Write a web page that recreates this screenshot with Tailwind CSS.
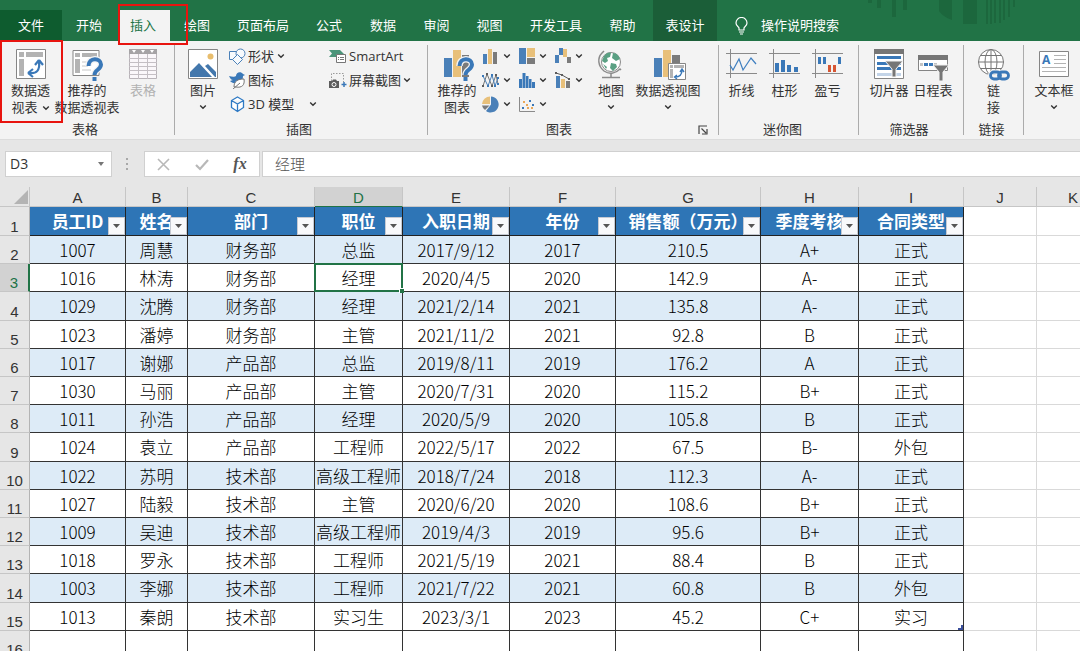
<!DOCTYPE html>
<html lang="zh-CN">
<head>
  <meta charset="UTF-8" />
  <meta name="viewport" content="width=device-width, initial-scale=1.0"/>
  <title>员工数据表</title>
  <script src="https://cdn.jsdelivr.net/npm/@tailwindcss/browser@4"></script>
</head>
<body class="h-screen flex flex-col overflow-hidden bg-[#e6e6e6] text-[#333] font-['Open_Sans','Noto_Sans_CJK_SC',sans-serif]">

  <!-- Shared symbols -->
  <svg class="hidden">
    <symbol id="chevron" viewBox="0 0 8 8"><path d="M1.2 2.5 4 5.2 6.8 2.5" fill="none" stroke="#333" stroke-width="1.4"/></symbol>
  </svg>

  <!-- Tabs -->
  <header class="relative h-[41px] shrink-0 bg-[#217346] text-white text-[13px]">
    <svg class="absolute right-0 top-0 w-[215px] h-[26px]" viewBox="0 0 215 26" fill="#1c673d">
      <path d="M3 0h4v3H3zM12 0h4v8h-4zM27 0h4v17h-4zM38 0h4v10h-4zM74 0h13v20q-9-3-13-9zM98 0h14v24H98zM121 0h2v24h-2zM125 0h2v24h-2zM129 0h2v23h-2zM134 0h2v23h-2zM138 0h2v20h-2zM143 0h2v17h-2zM148 0h2v7h-2z"/>
    </svg>
    <nav class="relative flex h-full">
      <button class="mt-[10px] w-[62px] bg-[#0e5c2f]">文件</button>
      <button class="mt-[10px] w-[54px]">开始</button>
      <button class="relative mt-[10px] ml-[3px] w-[51px] pr-[3px] bg-[#f3f3f3] text-[#217346]">
        插入
        <span class="absolute z-10 -left-px -top-[6px] w-[70px] h-[41px] border-2 border-[#e8140f] pointer-events-none"></span>
      </button>
      <button class="mt-[10px] w-[54px]">绘图</button>
      <button class="mt-[10px] w-[78px]">页面布局</button>
      <button class="mt-[10px] w-[54px]">公式</button>
      <button class="mt-[10px] w-[54px]">数据</button>
      <button class="mt-[10px] w-[53px]">审阅</button>
      <button class="mt-[10px] w-[53px]">视图</button>
      <button class="mt-[10px] w-[80px]">开发工具</button>
      <button class="mt-[10px] w-[53px]">帮助</button>
      <button class="ml-1 w-16 pt-[10px] bg-[#1b5e38]">表设计</button>
      <button class="mt-[10px] ml-[17px] flex items-center gap-3">
        <svg class="w-[15px] h-[18px]" viewBox="0 0 15 18" fill="none" stroke="#fff" stroke-width="1.2">
          <path d="M5 13v-2C4.500 9.500 2 9 2 6a5.500 5.500 0 0 1 11 0c0 3-2.500 3.500-3 5v2zM5 15h5M6 17h3"/>
        </svg>
        操作说明搜索
      </button>
    </nav>
  </header>

  <!-- Ribbon -->
  <section class="h-[99px] shrink-0 flex bg-[#f3f3f3] border-b border-[#dcdcdc] text-[13px] leading-[17px] whitespace-nowrap">

    <!-- Tables -->
    <div class="w-[174px] shrink-0 flex flex-col">
      <div class="flex h-20">
        <button class="relative w-[61px] pt-2 flex flex-col items-center">
          <svg class="w-[30px] h-[30px] mb-[3px]" viewBox="0 0 30 30">
            <path d="M.5.500h29v29H.5z" fill="#fff" stroke="#858585"/>
            <path d="M3 3h5v5H3zM10 3h17v5H10zM3 10h5v17H3z" fill="#b3b3b3"/>
            <path d="M13 24c8 1 11-3 10-11M23 11l-4 5M23 11l4 5M12 24l5-4M12 24l5 4" fill="none" stroke="#3a78b8" stroke-width="2.200"/>
          </svg>
          <span>数据透</span>
          <span class="flex items-center gap-1">视表<svg class="w-2 h-2"><use href="#chevron"/></svg></span>
          <span class="absolute z-10 left-0 -top-px w-[63px] h-[83px] border-2 border-[#e8140f] pointer-events-none"></span>
        </button>
        <button class="w-[52px] pt-2 flex flex-col items-center">
          <svg class="w-[32px] h-[32px] mb-px" viewBox="0 0 32 32">
            <path d="M2 1.500h26v25H2z" fill="#fff" stroke="#858585"/>
            <path d="M4 4h5v4H4zM11 4h15v4H11zM4 10h5v14H4z" fill="#b3b3b3"/>
            <path d="M11 13h7M11 17h6M11 21h9" stroke="#c8c8c8"/>
            <path d="M17.500 17c0-9 12.500-8.500 12.500-1.500 0 5.500-6.500 5-6.500 10.500" fill="none" stroke="#f3f3f3" stroke-width="6.500"/>
            <path d="M17.500 17c0-9 12.500-8.500 12.500-1.500 0 5.500-6.500 5-6.500 10.500" fill="none" stroke="#3a78b8" stroke-width="4"/>
            <path d="M21.500 28h4v4h-4z" fill="#3a78b8"/>
          </svg>
          <span>推荐的</span>
          <span>数据透视表</span>
        </button>
        <button class="w-[60px] pt-2 flex flex-col items-center text-[#b1b1b1]" disabled>
          <svg class="w-[30px] h-[30px] mb-[3px]" viewBox="0 0 30 30">
            <path d="M1.500.500h27v29h-27z" fill="#faf7fa" stroke="#b8b3b8"/>
            <path d="M1 0h28v5H1z" fill="#a5a3a5"/>
            <path d="M4 1h4l-2 3zM13 1h4l-2 3zM22 1h4l-2 3z" fill="#fff"/>
            <path d="M1 9.500h28M1 13.500h28M1 17.500h28M1 21.500h28M1 25.500h28M10.500 5v25M19.500 5v25" stroke="#c4bfc4"/>
          </svg>
          <span>表格</span>
        </button>
      </div>
      <p class="text-center pr-1">表格</p>
    </div>
    <div class="w-px my-1 shrink-0 bg-[#ababab]"></div>

    <!-- Illustrations -->
    <div class="w-[252px] shrink-0 flex flex-col">
      <div class="flex h-20 pl-[2px]">
        <button class="w-[52px] pt-2 flex flex-col items-center">
          <svg class="w-[30px] h-[30px] mb-[3px]" viewBox="0 0 30 30">
            <path d="M.5.500h29v29H.5z" fill="#fff" stroke="#858585"/>
            <circle cx="22.500" cy="7.500" r="3" fill="#e8bd6d"/>
            <path d="M2 28v-5l9-9 13 14zM17 17l3-2 8 8v5h-1z" fill="#4377ac"/>
          </svg>
          <span>图片</span>
          <svg class="w-2 h-2 mt-1"><use href="#chevron"/></svg>
        </button>
        <div class="w-[100px] pt-[3px]">
          <button class="h-6 flex items-center">
            <svg class="w-[17px] h-[17px] mr-[2px]" viewBox="0 0 17 17" fill="#f7fafd" stroke="#4a80b8">
              <path d="M.5 3.500h7v8h-7z"/><circle cx="11.500" cy="5.500" r="4.500"/><path d="m8.500 6.500 5 5-5 5-5-5z"/>
            </svg>
            形状<svg class="w-2 h-2 ml-[3px]"><use href="#chevron"/></svg>
          </button>
          <button class="h-6 flex items-center">
            <svg class="w-[17px] h-[17px] mr-[2px]" viewBox="0 0 17 17">
              <path d="M0 4c3 1 6 1 7 0 0-4 5-5 7-2l2 1-2 1c0 5-3 6-5 7-3 1-6 0-8-2l3-1C2 8 1 6 0 4z" fill="#3a78b8"/>
              <path d="M5 15c0-6 4-8 10-8 1 6-2 9-8 8zM4 17l7-6" fill="#fff" stroke="#767676"/>
            </svg>
            图标
          </button>
          <button class="h-6 flex items-center">
            <svg class="w-[17px] h-[17px] mr-[2px]" viewBox="0 0 17 17" fill="#fff" stroke="#2f7ac4" stroke-width="1.300">
              <path d="m8.500 1 6 3.500v7l-6 4-6-4v-7zM2.500 4.500l6 3.500 6-3.500M8.500 8v7.500"/>
            </svg>
            3D 模型<svg class="w-2 h-2 ml-[15px]"><use href="#chevron"/></svg>
          </button>
        </div>
        <div class="pt-[3px]">
          <button class="h-6 flex items-center">
            <svg class="w-[18px] h-[17px] mr-[2px]" viewBox="0 0 18 17">
              <path d="M0 2h11l4 4v3H0l3-3.500z" fill="#4b9479"/>
              <path d="M7.500 6.500h9v8h-9z" fill="#fff" stroke="#767676"/>
              <path d="M9 9.500h1M9 11.500h1M11 9.500h4M11 11.500h4" stroke="#767676"/>
            </svg>
            SmartArt
          </button>
          <button class="h-6 flex items-center">
            <svg class="w-[18px] h-[17px] mr-[2px]" viewBox="0 0 18 17">
              <path d="M2.500 9V1.500h12V10" fill="none" stroke="#999" stroke-dasharray="1.500 1.500"/>
              <path d="M0 9h3l1-1.500h3L8 9h2v7H0z" fill="#5c5c5c"/>
              <circle cx="5" cy="12.500" r="2" fill="none" stroke="#fff"/>
              <path d="M15 10v5M12.500 12.500h5" stroke="#3a78b8" stroke-width="1.500"/>
            </svg>
            屏幕截图<svg class="w-2 h-2 ml-[2px]"><use href="#chevron"/></svg>
          </button>
        </div>
      </div>
      <p class="text-center pr-1">插图</p>
    </div>
    <div class="w-px my-1 shrink-0 bg-[#ababab]"></div>

    <!-- Charts -->
    <div class="w-[290px] shrink-0 flex flex-col">
      <div class="flex h-20 pl-1">
        <button class="w-[50px] pt-2 flex flex-col items-center">
          <svg class="w-[32px] h-[32px] mb-px ml-[3px]" viewBox="0 0 32 32">
            <path d="M1 9h8v19H1z" fill="#4a80b8"/><path d="M10 1h8v27h-8z" fill="#e8c07a"/><path d="M19 6h7v22h-7z" fill="#7b7b7b"/>
            <path d="M16.500 17c0-9 12.500-8.500 12.500-1.500 0 5.500-6.500 5-6.500 10.500" fill="none" stroke="#f3f3f3" stroke-width="6.500"/>
            <path d="M16.500 17c0-9 12.500-8.500 12.500-1.500 0 5.500-6.500 5-6.500 10.500" fill="none" stroke="#3a78b8" stroke-width="4"/>
            <path d="M20.500 28h4v4h-4z" fill="#3a78b8"/>
          </svg>
          <span>推荐的</span>
          <span>图表</span>
        </button>
        <div class="grid grid-rows-[24px_24px_24px] grid-cols-[36px_36px_36px] grid-flow-col pt-[3px]">
          <button class="flex items-center gap-[3px]" aria-label="柱形图">
            <svg class="w-[18px] h-[17px]" viewBox="0 0 18 17"><path d="M1 6h4v10H1z" fill="#4a80b8"/><path d="M6 1h4v15H6z" fill="#e8c07a"/><path d="M11 4h4v12h-4z" fill="#7b7b7b"/></svg>
            <svg class="w-2 h-2"><use href="#chevron"/></svg>
          </button>
          <button class="flex items-center gap-[3px]" aria-label="折线图">
            <svg class="w-[18px] h-[17px]" viewBox="0 0 18 17">
              <path d="M1 14 5 2l5 12 4-11 2 9" fill="none" stroke="#767676"/><path d="m1 4 5 10 4-11 3 11 3-8" fill="none" stroke="#4a80b8"/>
              <path d="M0 13h2v2H0zM4 1h2v2H4zM9 13h2v2H9zM13 2h2v2h-2z" fill="#5c5c5c"/><path d="M0 3h2v2H0zM5 13h2v2H5zM9 2h2v2H9zM12 13h2v2h-2zM15 5h2v2h-2zM15 11h2v2h-2z" fill="#3a78b8"/>
            </svg>
            <svg class="w-2 h-2"><use href="#chevron"/></svg>
          </button>
          <button class="flex items-center gap-[3px]" aria-label="饼图">
            <svg class="w-[18px] h-[17px]" viewBox="0 0 18 17">
              <path d="M9 8.500V.500A8 8 0 1 1 4 15z" fill="#4a80b8"/><path d="M8 8H0a8 8 0 0 1 8-7.500z" fill="#e8c07a"/><path d="M7.500 9.500H0A8 8 0 0 0 3 14z" fill="#7b7b7b"/>
            </svg>
            <svg class="w-2 h-2"><use href="#chevron"/></svg>
          </button>
          <button class="flex items-center gap-[3px]" aria-label="层次结构图">
            <svg class="w-[18px] h-[17px]" viewBox="0 0 18 17"><path d="M1 0h7v16H1z" fill="#4a80b8"/><path d="M9 0h8v9H9z" fill="#e8c07a"/><path d="M9 10h8v6H9z" fill="#7b7b7b"/></svg>
            <svg class="w-2 h-2"><use href="#chevron"/></svg>
          </button>
          <button class="flex items-center gap-[3px]" aria-label="统计图">
            <svg class="w-[18px] h-[17px]" viewBox="0 0 18 17" fill="#3a78b8"><path d="M1 7h3v9H1zM4.500 1h3v15h-3zM8 4h2.500v12H8zM11 7h2.500v9H11zM14 10h3v6h-3z"/></svg>
            <svg class="w-2 h-2"><use href="#chevron"/></svg>
          </button>
          <button class="flex items-center gap-[3px]" aria-label="散点图">
            <svg class="w-[18px] h-[17px]" viewBox="0 0 18 17">
              <path d="M1.500 1v14.500H17" fill="none" stroke="#8a8a8a"/>
              <path d="M11 4h2v2h-2zM4 11h2v2H4zM14 8h2v2h-2z" fill="#3a78b8"/><path d="M5 5h2v2H5zM8 8h2v2H8zM13 11h2v2h-2zM9 11h2v2H9z" fill="#e8a85a"/>
            </svg>
            <svg class="w-2 h-2"><use href="#chevron"/></svg>
          </button>
          <button class="flex items-center gap-[3px]" aria-label="瀑布图">
            <svg class="w-[18px] h-[17px]" viewBox="0 0 18 17"><path d="M1 7h4v8H1zM5 0h4v7H5z" fill="#4a80b8"/><path d="M9 1h4v8H9z" fill="#e8c07a"/><path d="M13 9h4v6h-4z" fill="#7b7b7b"/></svg>
            <svg class="w-2 h-2"><use href="#chevron"/></svg>
          </button>
          <button class="flex items-center gap-[3px]" aria-label="组合图">
            <svg class="w-[18px] h-[17px]" viewBox="0 0 18 17"><path d="M2 4h4v12H2z" fill="#4a80b8"/><path d="M7 7h4v9H7z" fill="#e8c07a"/><path d="M12 9h4v7h-4z" fill="#7b7b7b"/><path d="m2 1 6 2 7 4" fill="none" stroke="#5c5c5c"/><path d="M1 0h2v2H1zM7 2h2v2H7zM14 6h2v2h-2z" fill="#5c5c5c"/></svg>
            <svg class="w-2 h-2"><use href="#chevron"/></svg>
          </button>
        </div>
        <button class="w-[42px] pt-2 flex flex-col items-center">
          <svg class="w-[30px] h-[30px] mb-[3px]" viewBox="0 0 30 30">
            <circle cx="15" cy="13" r="9.500" fill="#fff" stroke="#8a8a8a"/>
            <path d="M8 7c3-4 6-4 7-3l-1 4-3 1 1 3-3 2-3-2zM17 4c4 0 6 3 7 6l-4 2-4-3zM15 14l5 1 1 3-4 4-3-3zM7 15l4 3-1 2z" fill="#5aa083"/>
            <path d="M8 2 6 4C1 9 2 17 8 22c6 4 12 2 16-2l1 1M15 24v4M6 28.500h18" fill="none" stroke="#8a8a8a" stroke-width="1.500"/>
          </svg>
          <span>地图</span>
          <svg class="w-2 h-2 mt-1"><use href="#chevron"/></svg>
        </button>
        <button class="w-[72px] pt-2 flex flex-col items-center">
          <svg class="w-[33px] h-[32px] mb-px ml-[2px]" viewBox="0 0 33 32">
            <path d="M1 9h8v19H1z" fill="#4a80b8"/><path d="M10 1h8v27h-8z" fill="#e8c07a"/><path d="M19 6h8v9h-8z" fill="#7b7b7b"/>
            <path d="M15.500 14.500h17v16h-17z" fill="#fff" stroke="#858585"/>
            <path d="M17 16h3v3h-3zM21 16h10v3H21zM17 20h3v9h-3z" fill="#b3b3b3"/>
            <path d="M22 28c5 0 7-2 7-7M27 23l2-3 2 3M24 26l-2.500 2 2.500 2" fill="none" stroke="#3a78b8" stroke-width="1.400"/>
          </svg>
          <span>数据透视图</span>
          <svg class="w-2 h-2 mt-1"><use href="#chevron"/></svg>
        </button>
      </div>
      <div class="flex items-center">
        <p class="w-[262px] text-center">图表</p>
        <button class="ml-2" aria-label="图表选项">
          <svg class="w-[10px] h-[10px]" viewBox="0 0 10 10" fill="none" stroke="#444" stroke-width="1.200"><path d="M1 9V1h8M3.500 3.500 8 8M9 4v5H4"/></svg>
        </button>
      </div>
    </div>
    <div class="w-px my-1 shrink-0 bg-[#ababab]"></div>

    <!-- Sparklines -->
    <div class="w-[139px] shrink-0 flex flex-col">
      <div class="flex h-20 pl-px">
        <button class="w-[43px] pt-2 flex flex-col items-center">
          <svg class="w-[31px] h-[30px] mb-[3px]" viewBox="0 0 31 30" fill="none" stroke="#8a8a8a">
            <path d="M0 4.500h31M0 24.500h31M4.500 0v29"/><path d="m4 16 3 5 6-11 4 11 8-12 5 6" stroke="#3f7fc0" stroke-width="1.200"/>
          </svg>
          <span>折线</span>
        </button>
        <button class="w-[43px] pt-2 flex flex-col items-center">
          <svg class="w-[31px] h-[30px] mb-[3px]" viewBox="0 0 31 30" fill="none" stroke="#8a8a8a">
            <path d="M0 4.500h31M0 24.500h31M4.500 0v29"/><path d="M6 14h4v9H6zM12 11h4v12h-4zM18 16h4v7h-4zM25 18h4v5h-4z" fill="#3a78b8" stroke="none"/>
          </svg>
          <span>柱形</span>
        </button>
        <button class="w-[43px] pt-2 flex flex-col items-center">
          <svg class="w-[31px] h-[30px] mb-[3px]" viewBox="0 0 31 30" fill="none" stroke="#8a8a8a">
            <path d="M0 4.500h31M0 24.500h31M3.500 0v29"/><path d="M6 8h3v7H6zM11 8h3v7h-3zM26 8h3v7h-3z" fill="#3a78b8" stroke="none"/><path d="M16 16h3v7h-3zM21 16h3v7h-3z" fill="#d65532" stroke="none"/>
          </svg>
          <span>盈亏</span>
        </button>
      </div>
      <p class="text-center pr-3">迷你图</p>
    </div>
    <div class="w-px my-1 shrink-0 bg-[#ababab]"></div>

    <!-- Filters -->
    <div class="w-[104px] shrink-0 flex flex-col">
      <div class="flex h-20 pl-2">
        <button class="w-11 pt-2 flex flex-col items-center">
          <svg class="w-[30px] h-[30px] mb-[3px]" viewBox="0 0 30 30">
            <path d="M.5.500h29v29H.5z" fill="#fff" stroke="#858585"/><path d="M0 0h30v5H0z" fill="#767676"/>
            <path d="M3 7h24v3H3zM3 13h24v3H3zM3 18h24v3H3z" fill="#3a78b8"/><path d="M3 24h24v3H3z" fill="#c3d4e8"/>
            <path d="M11 12h18l-7 8v8h-4v-8z" fill="#767676" stroke="#f3f3f3"/>
          </svg>
          <span>切片器</span>
        </button>
        <button class="w-11 pt-2 flex flex-col items-center">
          <svg class="w-[32px] h-[32px] mb-px" viewBox="0 0 32 32">
            <path d="M1.500 6.500h29v15h-29z" fill="#fff" stroke="#858585"/><path d="M1 6h30v5H1z" fill="#767676"/>
            <path d="M7 14h4v3H7zM12 14h4v3h-4z" fill="#3a78b8"/><path d="M3 14h3v3H3zM17 14h3v3h-3z" fill="#c3c3c3"/>
            <path d="M16 16h16l-6 7v9h-4v-9z" fill="#767676" stroke="#f3f3f3"/>
          </svg>
          <span>日程表</span>
        </button>
      </div>
      <p class="text-center pr-1">筛选器</p>
    </div>
    <div class="w-px my-1 shrink-0 bg-[#ababab]"></div>

    <!-- Links -->
    <div class="w-[59px] shrink-0 flex flex-col">
      <button class="h-20 pt-2 flex flex-col items-center">
        <svg class="w-[32px] h-[32px] mb-px" viewBox="0 0 32 32" fill="none">
          <g fill="#fff" stroke="#767676"><circle cx="13" cy="13" r="12.500"/><ellipse cx="13" cy="13" rx="6" ry="12.500" fill="none"/><path d="M.5 13h25M3 6.500h20M3 19.500h20M13 .5v25"/></g>
          <g stroke="#f3f3f3" stroke-width="5"><rect x="12.500" y="23" width="10" height="7" rx="3.500"/><rect x="20.500" y="23" width="10" height="7" rx="3.500"/></g>
          <g stroke="#3a78b8" stroke-width="2.800"><rect x="12.500" y="23" width="10" height="7" rx="3.500"/><rect x="20.500" y="23" width="10" height="7" rx="3.500"/></g>
        </svg>
        <span>链</span>
        <span>接</span>
      </button>
      <p class="text-center pr-1">链接</p>
    </div>
    <div class="w-px my-1 shrink-0 bg-[#ababab]"></div>

    <!-- Text -->
    <div class="shrink-0">
      <button class="w-[60px] pt-2 flex flex-col items-center">
        <svg class="w-[30px] h-[30px] mb-[3px]" viewBox="0 0 30 30">
          <path d="M.5 2.500h29v25H.5z" fill="#fff" stroke="#858585"/>
          <text x="3" y="15" font-size="12" font-weight="700" fill="#3a78b8">A</text>
          <path d="M15 6.500h12M15 10.500h12M15 14.500h12M3 18.500h24M3 22.500h24" stroke="#b3b3b3"/>
        </svg>
        <span>文本框</span>
        <svg class="w-2 h-2 mt-1"><use href="#chevron"/></svg>
      </button>
    </div>
  </section>

  <!-- Formula bar -->
  <div class="flex shrink-0 h-[26px] mt-[11px] mb-[10px] pl-[5px] text-sm">
    <div class="w-[107px] flex items-center bg-white border border-[#d0d0d0]">
      <input type="text" value="D3" aria-label="名称框" class="w-[90px] pl-1 focus:outline-none" />
      <button aria-label="名称列表"><svg class="w-[10px] h-[6px]" viewBox="0 0 10 6"><path d="M2 1h6L5 5z" fill="#767676"/></svg></button>
    </div>
    <svg class="w-8 h-full" viewBox="0 0 32 26" fill="#a8a8a8"><path d="M14 7h2v2h-2zM14 12h2v2h-2zM14 17h2v2h-2z"/></svg>
    <div class="w-[116px] flex items-center justify-around bg-white border border-[#d0d0d0]">
      <button aria-label="取消"><svg class="w-[13px] h-[13px]" viewBox="0 0 13 13"><path d="m1 1 11 11M12 1 1 12" stroke="#b8b8b8" stroke-width="1.600"/></svg></button>
      <button aria-label="输入"><svg class="w-[14px] h-[13px]" viewBox="0 0 14 13"><path d="m1 7 4 4 8-9" fill="none" stroke="#b8b8b8" stroke-width="2.200"/></svg></button>
      <button aria-label="插入函数" class="font-['Liberation_Serif',serif] italic font-bold text-base leading-5 text-[#555]">fx</button>
    </div>
    <input type="text" value="经理" aria-label="编辑栏" class="flex-1 ml-[2px] pl-3 bg-white border border-r-0 border-[#d0d0d0] text-[15px] font-light text-[#555] font-['Noto_Sans_CJK_SC',sans-serif] focus:outline-none" />
  </div>

  <!-- Sheet -->
  <main class="flex-1 min-h-0 overflow-hidden bg-white">
    <table class="table-fixed w-[1110px] border-separate border-spacing-0 bg-white text-[17px] leading-5 text-center whitespace-nowrap font-['Noto_Sans_CJK_SC',sans-serif]">
      <colgroup>
        <col class="w-[30px]"><col class="w-[96px]"><col class="w-[62px]"><col class="w-[127px]"><col class="w-[88px]"><col class="w-[107px]">
        <col class="w-[106px]"><col class="w-[145px]"><col class="w-[98px]"><col class="w-[105px]"><col class="w-[73px]"><col class="w-[73px]">
      </colgroup>
      <thead id="letters"></thead>
      <tbody id="sheet"></tbody>
    </table>
  </main>

  <script>
    const letters = 'ABCDEFGHIJK'.split('');
    const headers = ['员工ID', '姓名', '部门', '职位', '入职日期', '年份', '销售额（万元）', '季度考核', '合同类型'];
    const staff = [
      ['1007', '周慧', '财务部', '总监', '2017/9/12', '2017', '210.5', 'A+', '正式'],
      ['1016', '林涛', '财务部', '经理', '2020/4/5', '2020', '142.9', 'A-', '正式'],
      ['1029', '沈腾', '财务部', '经理', '2021/2/14', '2021', '135.8', 'A-', '正式'],
      ['1023', '潘婷', '财务部', '主管', '2021/11/2', '2021', '92.8', 'B', '正式'],
      ['1017', '谢娜', '产品部', '总监', '2019/8/11', '2019', '176.2', 'A', '正式'],
      ['1030', '马丽', '产品部', '主管', '2020/7/31', '2020', '115.2', 'B+', '正式'],
      ['1011', '孙浩', '产品部', '经理', '2020/5/9', '2020', '105.8', 'B', '正式'],
      ['1024', '袁立', '产品部', '工程师', '2022/5/17', '2022', '67.5', 'B-', '外包'],
      ['1022', '苏明', '技术部', '高级工程师', '2018/7/24', '2018', '112.3', 'A-', '正式'],
      ['1027', '陆毅', '技术部', '主管', '2020/6/20', '2020', '108.6', 'B+', '正式'],
      ['1009', '吴迪', '技术部', '高级工程师', '2019/4/3', '2019', '95.6', 'B+', '正式'],
      ['1018', '罗永', '技术部', '工程师', '2021/5/19', '2021', '88.4', 'B', '正式'],
      ['1003', '李娜', '技术部', '工程师', '2021/7/22', '2021', '60.8', 'B', '外包'],
      ['1013', '秦朗', '技术部', '实习生', '2023/3/1', '2023', '45.2', 'C+', '实习'],
    ];
    const active = { row: 3, col: 3 };

    // Column letters
    document.getElementById('letters').innerHTML = `
      <tr class="h-5 text-[15px] font-normal bg-[#e6e6e6] font-['Liberation_Sans',sans-serif]">
        <th class="border-r border-b border-[#c6c6c6]"><svg class="w-[14px] h-[14px] ml-auto mr-px" viewBox="0 0 14 14"><path d="M14 0v14H0z" fill="#b4b4b4"/></svg></th>
        ${letters.map((l, i) => `<th scope="col" class="p-0 pt-[3px] leading-4 font-normal ${i === active.col
          ? 'bg-[#d2d2d2] text-[#217346] border-r border-r-[#c6c6c6] border-b border-b-[#217346]'
          : 'border-r border-b border-[#c6c6c6]'}">${l}</th>`).join('')}
      </tr>`;

    function cell(row, col) {
      if (col >= headers.length) return '<td class="p-0 border-r border-b border-[#d9d9d9]"></td>';
      if (row === 1) {
        return `<td class="relative p-0 pb-px bg-[#2e75b6] border-r border-b border-[#222] text-white font-bold">
          ${headers[col]}
          <button class="absolute right-0 bottom-0 w-[17px] h-[18px] flex items-center justify-center bg-[#f8f9fb] border border-[#c5cad3]" aria-label="筛选${headers[col]}">
            <svg class="w-[7px] h-[4px]" viewBox="0 0 7 4"><path d="M0 0h7L3.500 4z" fill="#555"/></svg>
          </button>
        </td>`;
      }
      const text = staff[row - 2] ? staff[row - 2][col] : '';
      const bg = text && row % 2 === 0 ? 'bg-[#ddebf7]' : 'bg-white';
      let mark = '';
      if (row === active.row && col === active.col) {
        mark = '<span class="absolute z-10 -inset-px border-2 border-[#217346]"></span><span class="absolute z-10 -right-[2px] -bottom-[2px] size-[5px] bg-[#217346] border-t border-l border-white"></span>';
      }
      // table resize handle
      if (row === staff.length + 1 && col === headers.length - 1) {
        mark = '<svg class="absolute right-0 bottom-0 w-[5px] h-[5px]" viewBox="0 0 5 5"><path d="M5 0v5H0V3h3V0z" fill="#3b4f9c"/></svg>';
      }
      return `<td class="relative p-0 ${bg} border-r border-b border-[#333] font-light text-black">${text}${mark}</td>`;
    }

    let html = '';
    for (let row = 1; row <= 16; row++) {
      // rows average a little over 28px, every fifth one takes the extra pixel
      const height = row === 1 || row % 5 === 4 ? 'h-[29px]' : 'h-7';
      const head = row === active.row
        ? 'bg-[#d2d2d2] text-[#217346] border-r-2 border-r-[#217346]'
        : 'bg-[#e6e6e6] border-r border-r-[#b4b4b4]';
      html += `<tr class="${height}">
        <th scope="row" class="p-0 align-bottom text-[15px] leading-4 font-normal font-['Liberation_Sans',sans-serif] border-b border-b-[#c6c6c6] ${head}">${row}</th>
        ${letters.map((_, col) => cell(row, col)).join('')}
      </tr>`;
    }
    document.getElementById('sheet').innerHTML = html;
  </script>
</body>
</html>
